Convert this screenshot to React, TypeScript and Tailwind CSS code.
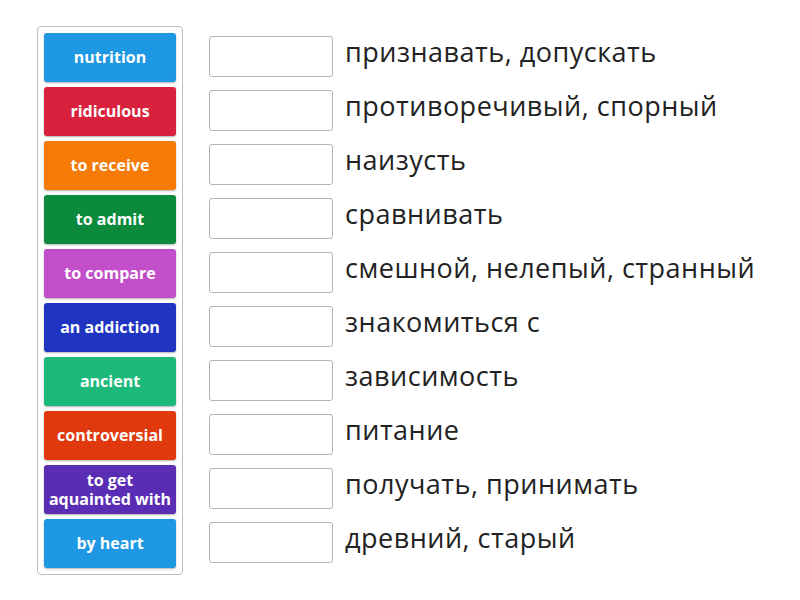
import React from "react";

const cards = [
  { label: "nutrition", cls: "bg-[#1e98e2]" },
  { label: "ridiculous", cls: "bg-[#d9213d]" },
  { label: "to receive", cls: "bg-[#f57a06]" },
  { label: "to admit", cls: "bg-[#0b8a3c]" },
  { label: "to compare", cls: "bg-[#c24fc9]" },
  { label: "an addiction", cls: "bg-[#1f35c2]" },
  { label: "ancient", cls: "bg-[#1db97b]" },
  { label: "controversial", cls: "bg-[#e0390e]" },
  { label: "to get aquainted with", cls: "bg-[#5a2db5]" },
  { label: "by heart", cls: "bg-[#1e98e2]" },
];

const answers = [
  "признавать, допускать",
  "противоречивый, спорный",
  "наизусть",
  "сравнивать",
  "смешной, нелепый, странный",
  "знакомиться с",
  "зависимость",
  "питание",
  "получать, принимать",
  "древний, старый",
];

const App = () => {
  return (
    <div className="w-[800px] h-[600px] bg-white flex pt-[26px] pl-[37px] font-['Open_Sans',sans-serif]">
      <div className="w-[146px] h-[549px] border border-[#bdbdbd] rounded-[4px] pt-[6px] pl-[6px] flex flex-col gap-[5px]">
        {cards.map((c) => (
          <div
            key={c.label}
            className={`${c.cls} w-[132px] h-[49px] rounded-[3px] shadow-[0_1px_2px_rgba(0,0,0,0.3)] flex items-center justify-center text-center text-white font-bold text-[16px] leading-[19px] px-0.5`}
          >
            {c.label === "to get aquainted with" ? (
              <span>
                to get
                <br />
                aquainted with
              </span>
            ) : (
              c.label
            )}
          </div>
        ))}
      </div>
      <div className="ml-[26px] pt-[10px] flex flex-col gap-[13px]">
        {answers.map((a) => (
          <div key={a} className="flex items-center h-[41px]">
            <div className="w-[124px] h-[41px] border border-[#b5b5b5] rounded-[3px] bg-white" />
            <span className="ml-[12px] text-[27px] tracking-[0.5px] text-[#222] leading-none pb-[10px]">{a}</span>
          </div>
        ))}
      </div>
    </div>
  );
};

export default App;
